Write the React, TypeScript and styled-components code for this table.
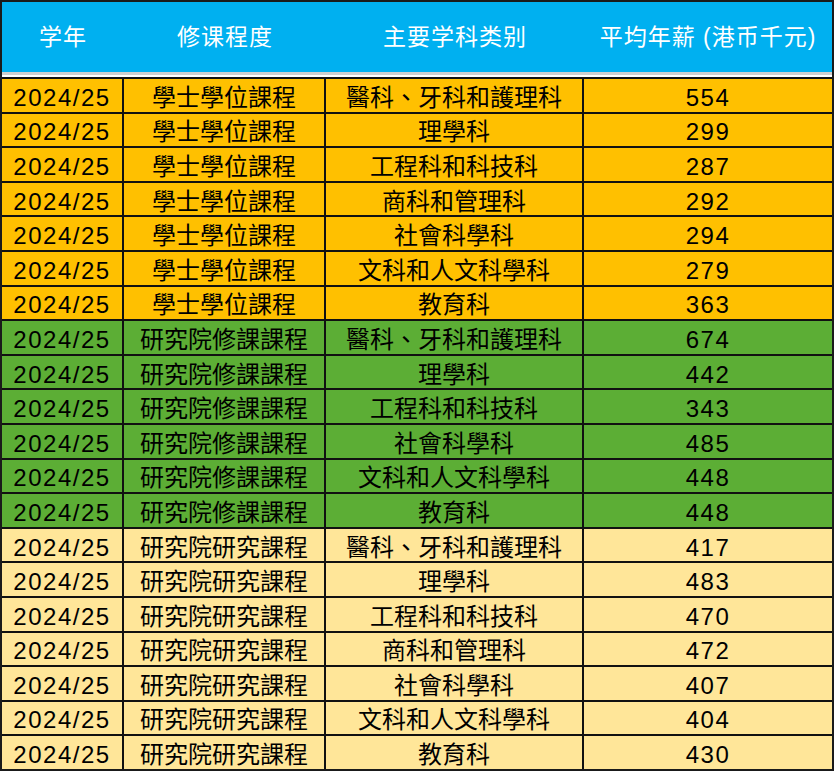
import React from 'react'
import styled, { createGlobalStyle } from 'styled-components'

const GlobalStyle = createGlobalStyle`
  html, body {
    margin: 0;
    padding: 0;
    background: #ffffff;
  }
  body {
    font-family: "Liberation Sans", "Noto Sans CJK TC", "Noto Sans CJK SC", sans-serif;
  }
`

const COLS = '122px 202px 258px 248px'

const Frame = styled.div`
  width: 830px;
  border: 2px solid #1a1a1a;
  display: flex;
  flex-direction: column;
`

const HeaderRow = styled.div`
  display: grid;
  grid-template-columns: ${COLS};
  height: 70px;
  background: #00b0f0;
`

const HeaderCell = styled.div`
  display: flex;
  align-items: center;
  justify-content: center;
  color: #ffffff;
  font-size: 23px;
  letter-spacing: 1px;
  line-height: 1;
  white-space: nowrap;
`

const Separator = styled.div`
  height: 5px;
  border-top: 3px solid #cfcfcf;
  box-sizing: border-box;
  background: #ffffff;
`

const Body = styled.div`
  display: grid;
  grid-template-columns: ${COLS};
  grid-auto-rows: 34.6px;
`

type Tone = 'orange' | 'green' | 'yellow'

const toneColor: Record<Tone, string> = {
  orange: '#ffc000',
  green: '#5cae35',
  yellow: '#ffe699',
}

const Cell = styled.div<{ $tone: Tone; $last?: boolean; $num?: boolean }>`
  display: flex;
  align-items: center;
  justify-content: center;
  box-sizing: border-box;
  padding-top: 5px;
  background: ${(p) => toneColor[p.$tone]};
  border-top: 2px solid #111;
  border-right: ${(p) => (p.$last ? 'none' : '2px solid #111')};
  color: #000;
  font-size: 24px;
  line-height: 1;
  letter-spacing: ${(p) => (p.$num ? '1.5px' : '0')};
  white-space: nowrap;
`

const ALL = ['醫科、牙科和護理科', '理學科', '工程科和科技科', '商科和管理科', '社會科學科', '文科和人文科學科', '教育科']
const NO_BUSINESS = ALL.filter((s) => s !== '商科和管理科')

const groups: { level: string; tone: Tone; subjects: string[]; pay: number[] }[] = [
  { level: '學士學位課程', tone: 'orange', subjects: ALL, pay: [554, 299, 287, 292, 294, 279, 363] },
  { level: '研究院修課課程', tone: 'green', subjects: NO_BUSINESS, pay: [674, 442, 343, 485, 448, 448] },
  { level: '研究院研究課程', tone: 'yellow', subjects: ALL, pay: [417, 483, 470, 472, 407, 404, 430] },
]

const rows = groups.flatMap((g) =>
  g.pay.map((pay, i) => ({ level: g.level, tone: g.tone, subject: g.subjects[i], pay }))
)

const App: React.FC = () => {
  return (
    <>
      <GlobalStyle />
      <Frame>
        <HeaderRow>
          <HeaderCell>学年</HeaderCell>
          <HeaderCell>修课程度</HeaderCell>
          <HeaderCell>主要学科类别</HeaderCell>
          <HeaderCell>平均年薪 (港币千元)</HeaderCell>
        </HeaderRow>
        <Separator />
        <Body>
          {rows.map((r, i) => (
            <React.Fragment key={i}>
              <Cell $tone={r.tone} $num>2024/25</Cell>
              <Cell $tone={r.tone}>{r.level}</Cell>
              <Cell $tone={r.tone}>{r.subject}</Cell>
              <Cell $tone={r.tone} $num $last>{r.pay}</Cell>
            </React.Fragment>
          ))}
        </Body>
      </Frame>
    </>
  )
}

export default App
